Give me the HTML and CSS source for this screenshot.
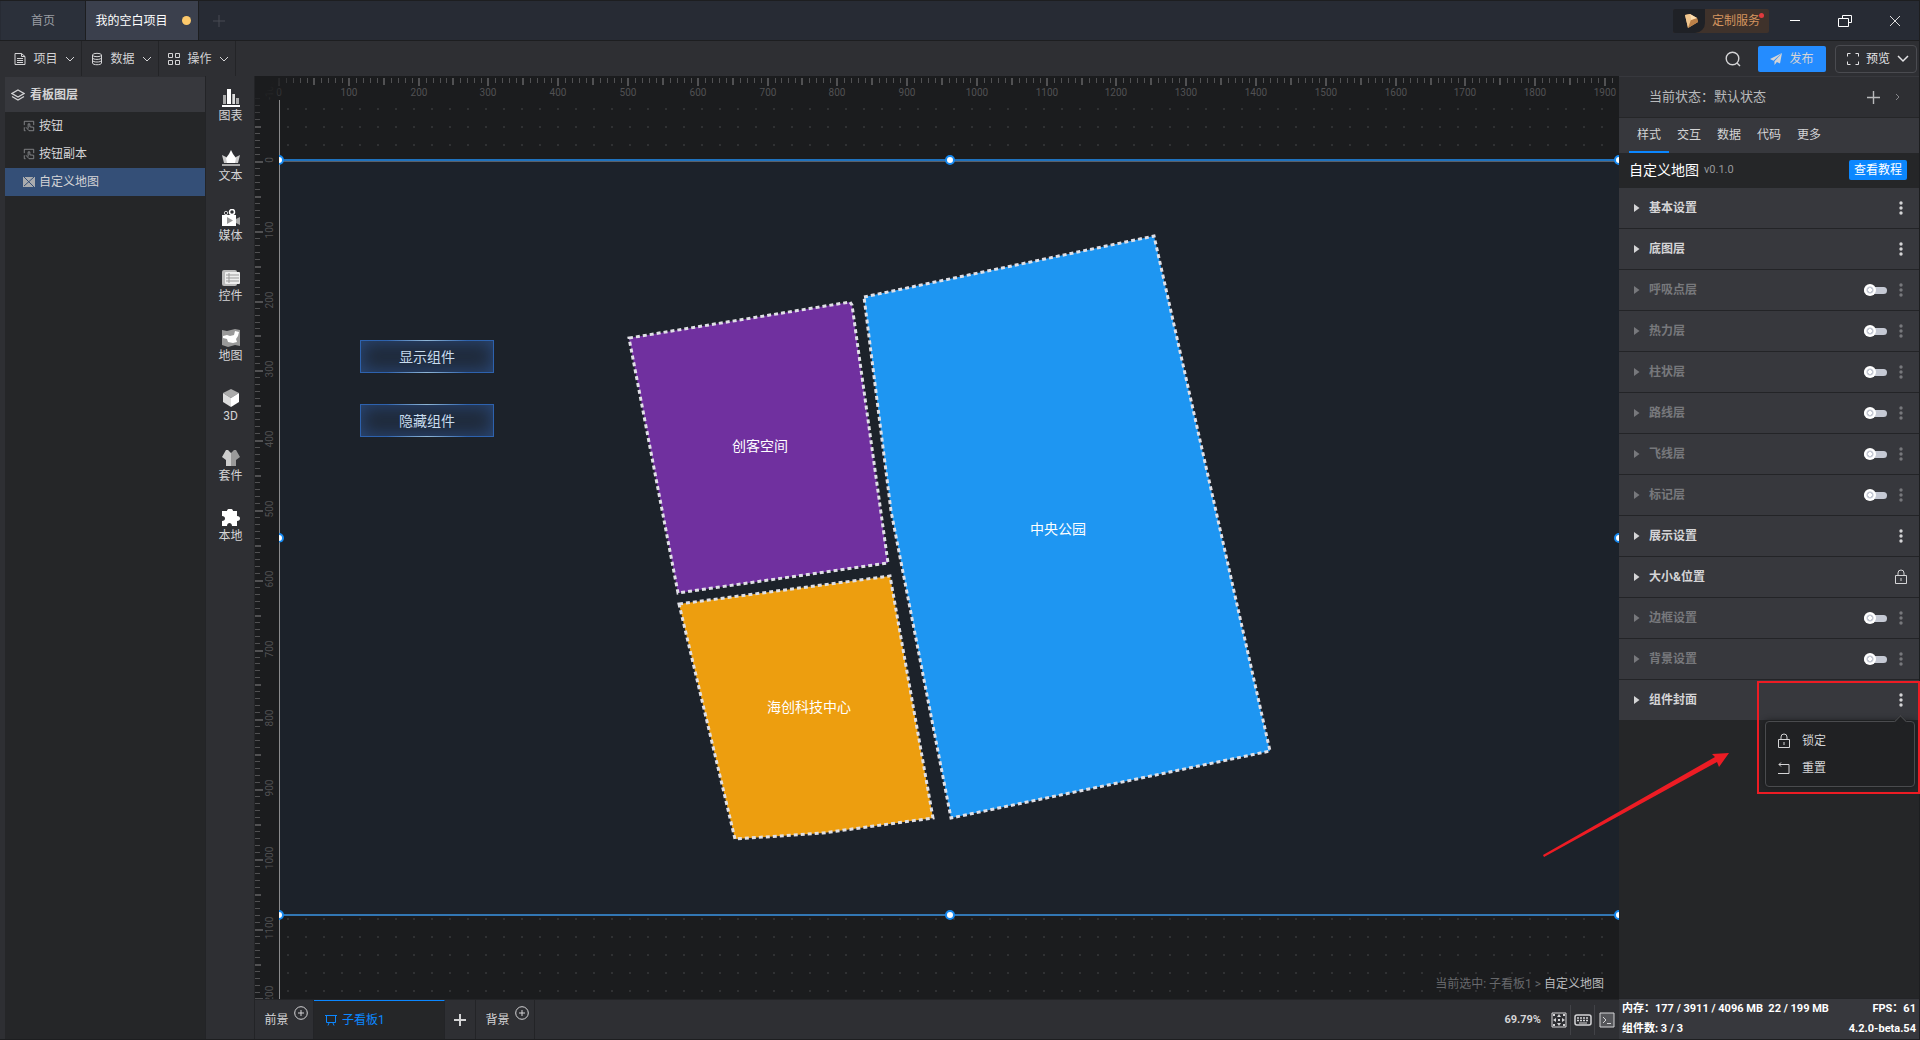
FILE: index.html
```html
<!DOCTYPE html>
<html lang="zh-CN">
<head>
  <meta charset="UTF-8" />
  <meta name="viewport" content="width=device-width, initial-scale=1.0"/>
  <title>我的空白项目</title>
  <link rel="stylesheet" href="styles.css">
</head>
<body>
  <!-- shared icons -->
  <svg class="defs" width="0" height="0">
    <symbol id="chevron" viewBox="0 0 10 6"><path d="M1 1l4 4 4-4" fill="none" stroke="currentColor"/></symbol>
    <symbol id="plus-circle" viewBox="0 0 14 14"><circle cx="7" cy="7" r="6.3" fill="none" stroke="currentColor"/><path d="M7 4v6M4 7h6" stroke="currentColor"/></symbol>
    <symbol id="lock" viewBox="0 0 14 16"><path d="M1.500 6.500h11v8h-11zM4 6.500V4a3 3 0 0 1 6 0v2.500" fill="none" stroke="currentColor"/><path d="M7 9v3" stroke="currentColor"/></symbol>
    <symbol id="dots" viewBox="0 0 4 16"><circle cx="2" cy="3" r="1.700"/><circle cx="2" cy="8" r="1.700"/><circle cx="2" cy="13" r="1.700"/></symbol>
    <symbol id="arrow" viewBox="0 0 6 10"><path d="M0 1l5.500 4L0 9z"/></symbol>
    <symbol id="tap" viewBox="0 0 14 14"><path d="M3 12.500H1.500v-4M1.500 6V1.500h11V6M6 10V4.500h2v3.500l4.500.5v4H7L3.500 8.500" fill="none" stroke="currentColor"/></symbol>
  </svg>

  <header class="titlebar">
    <button class="tab home">首页</button>
    <button class="tab active">我的空白项目<span class="unsaved"></span></button>
    <button class="tab-add" aria-label="新建"><svg width="14" height="14" viewBox="0 0 14 14"><path d="M7 1v12M1 7h12" stroke="currentColor"/></svg></button>
    <div class="window-tools">
      <button class="service">
        <span class="gem"><svg width="16" height="14" viewBox="0 0 16 14"><path d="M1 1l5-1 7 4 1 4-10 6z" fill="#dba76b"/><path d="M1 1l5-1 1 6-3 8z" fill="#f0c68f"/><path d="M13 4l1 4-10 6 3-8z" fill="#bb8048"/><path d="M6 0l7 4-6 2z" fill="#ffdfb0"/></svg></span>
        <span class="service-text">定制服务</span>
        <span class="red-dot"></span>
      </button>
      <button class="win" aria-label="最小化"><svg width="14" height="14" viewBox="0 0 14 14"><path d="M2 6.500h10" stroke="#fff"/></svg></button>
      <button class="win" aria-label="还原"><svg width="14" height="14" viewBox="0 0 14 14"><path d="M.5 4.500h10v8H.5zM4.500 4V1.500h9v7h-3" fill="none" stroke="#fff"/></svg></button>
      <button class="win" aria-label="关闭"><svg width="12" height="12" viewBox="0 0 12 12"><path d="M1 1l10 10M11 1L1 11" stroke="#ddd"/></svg></button>
    </div>
  </header>

  <nav class="toolbar">
    <button class="menu-btn"><svg width="12" height="14" viewBox="0 0 12 14"><path d="M1 1.500h6.500l3.500 3v8H1zM7.500 1.500v3H11M3 6.500h6M3 8.500h6M3 10.500h6" fill="none" stroke="currentColor"/></svg>项目<svg class="chev"><use href="#chevron"/></svg></button>
    <button class="menu-btn"><svg width="12" height="14" viewBox="0 0 12 14"><ellipse cx="6" cy="3" rx="4.500" ry="1.700" fill="none" stroke="currentColor"/><path d="M1.500 3v8c0 2.300 9 2.300 9 0V3M1.500 5.700c0 2.300 9 2.300 9 0M1.500 8.300c0 2.300 9 2.300 9 0" fill="none" stroke="currentColor"/></svg>数据<svg class="chev"><use href="#chevron"/></svg></button>
    <button class="menu-btn"><svg width="12" height="12" viewBox="0 0 12 12"><path d="M.5.500h4v4h-4zM7.500.500h4v4h-4zM.5 7.500h4v4h-4zM7.500 7.500h4v4h-4z" fill="none" stroke="currentColor"/></svg>操作<svg class="chev"><use href="#chevron"/></svg></button>
    <div class="toolbar-right">
      <button class="search" aria-label="搜索"><svg width="16" height="16" viewBox="0 0 16 16"><circle cx="7.500" cy="7.500" r="6.300" fill="none" stroke="currentColor" stroke-width="1.400"/><path d="M12 12l3 3" stroke="currentColor" stroke-width="1.400"/></svg></button>
      <button class="publish"><svg width="12" height="12" viewBox="0 0 12 12"><path d="M12 0L0 6l3.500 1.700zM12 0L4.500 8.300V12l2-2.500zM12 0L6.500 8.800l3.500 1.700z" fill="currentColor"/></svg>发布</button>
      <button class="preview"><svg width="12" height="12" viewBox="0 0 12 12"><path d="M.5 3.500v-3h3M8.500.500h3v3M11.500 8.500v3h-3M3.500 11.500h-3v-3" fill="none" stroke="currentColor"/></svg>预览<svg class="chev bright" viewBox="0 0 12 8"><path d="M1 1l5 5 5-5" fill="none" stroke="currentColor" stroke-width="1.500"/></svg></button>
    </div>
  </nav>

  <main class="workspace">
    <aside class="layers">
      <h2><svg width="14" height="12" viewBox="0 0 14 12"><path d="M7 1l6 3.500L7 8 1 4.500zM1 7.500L7 11l6-3.500" fill="none" stroke="currentColor" stroke-width="1.300"/></svg>看板图层</h2>
      <ul>
        <li><svg width="12" height="12"><use href="#tap"/></svg>按钮</li>
        <li><svg width="12" height="12"><use href="#tap"/></svg>按钮副本</li>
        <li class="selected"><svg width="12" height="12" viewBox="0 0 12 12"><path d="M0 1h12v10H0z" fill="#a9abae"/><path d="M1 1l10 10M11 1L1 10" fill="none" stroke="#344f77"/></svg>自定义地图</li>
      </ul>
    </aside>

    <nav class="components">
      <button><svg viewBox="0 0 18 18"><path d="M1 6h3v9H1zM10 5h3v10h-3zM14 9h3v6h-3z" fill="#aaa"/><path d="M5 0h4v15H5zM0 16h18v2H0z" fill="#fff"/><path d="M11 5h2v10h-2z" fill="#ddd"/></svg>图表</button>
      <button><svg viewBox="0 0 18 18"><path d="M0 6l4 2 5 6 5-6 4-2-2 8H2z" fill="#ccc"/><path d="M9 1l2 4 3 4-1 5H5L4 9l3-4z" fill="#fff"/><path d="M0 15h18v2H0z" fill="#aaa"/></svg>文本</button>
      <button><svg viewBox="0 0 18 18"><circle cx="4" cy="4" r="1.700" fill="none" stroke="#ccc"/><circle cx="10" cy="3" r="2.500" fill="none" stroke="#fff" stroke-width="1.500"/><path d="M0 6h14v11H0z" fill="#fff"/><path d="M14 10l4-2v8l-4-2z" fill="#aaa"/><path d="M5 8l6 3.500L5 15z" fill="#999"/></svg>媒体</button>
      <button><svg viewBox="0 0 18 18"><rect y="1" width="15" height="16" rx="2" fill="#bbb"/><rect x="3" y="3" width="15" height="12" rx="1" fill="#eee"/><path d="M4 6h13M4 9h13M4 12h13M7 4v10" stroke="#999"/></svg>控件</button>
      <button><svg viewBox="0 0 18 18"><path d="M0 1l5 1 8-2 5 1v16l-5-1-7 2-6-2z" fill="#999"/><path d="M1 7l4-1 3 1 4-1 1-4 4 1-1 4-2 3 1 3-4 1-5-1-1-3-4-1z" fill="#fff"/></svg>地图</button>
      <button><svg viewBox="0 0 18 18"><path d="M9 0l8 4-8 5-8-5z" fill="#aaa"/><path d="M1 4l8 5v9l-8-5z" fill="#ddd"/><path d="M17 4L9 9v9l8-5z" fill="#fff"/></svg>3D</button>
      <button><svg viewBox="0 0 18 18"><path d="M4 1h2l3 3v13H4V11L0 8z" fill="#ccc"/><path d="M14 1h-2L9 4v13h5v-6l4-3z" fill="#999"/></svg>套件</button>
      <button><svg viewBox="0 0 18 18"><path d="M0 2h5c0-3 6-3 6 0h4v5c4 0 4 5 0 5v5h-5c0-4-5-4-5 0H0v-5c4 0 4-5 0-5z" fill="#fff"/></svg>本地</button>
    </nav>

    <section class="center">
      <div class="canvas">
        <svg class="ruler" id="ruler"></svg>
        <div class="corner"></div>
        <div class="grid"></div>
        <div class="guide"></div>
        <div class="artboard">
          <button class="stage-btn show">显示组件</button>
          <button class="stage-btn hide">隐藏组件</button>
          <svg class="map" width="1340" height="754" viewBox="0 0 1340 754">
            <path fill="#70309f" d="M350 177L571 141l2 3 36 258-210 30z"/>
            <path fill="#ed9e0f" d="M400 443l211-28 43 242-110 15-88 6z"/>
            <path fill="#1e96f2" d="M585 136L875 75l116 515-319 67L612 350z"/>
            <text x="481" y="290">创客空间</text>
            <text x="779" y="373">中央公园</text>
            <text x="530" y="551">海创科技中心</text>
          </svg>
          <span class="handle tl"></span><span class="handle tc"></span><span class="handle tr"></span>
          <span class="handle ml"></span><span class="handle mr"></span>
          <span class="handle bl"></span><span class="handle bc"></span><span class="handle br"></span>
        </div>
        <div class="crumb">当前选中: 子看板1 &gt; <b>自定义地图</b></div>
      </div>
      <footer class="boards">
        <button class="board">前景<svg class="add"><use href="#plus-circle"/></svg></button>
        <button class="board current"><svg width="12" height="12" viewBox="0 0 12 12"><path d="M0 1.500h12M1.500 2v6.500h9V2M4 9l-1 2.500M8 9l1 2.500" fill="none" stroke="currentColor"/></svg>子看板1</button>
        <button class="board new" aria-label="添加子看板"><svg width="12" height="12" viewBox="0 0 12 12"><path d="M6 0v12M0 6h12" stroke="currentColor" stroke-width="2"/></svg></button>
        <button class="board">背景<svg class="add"><use href="#plus-circle"/></svg></button>
        <div class="zoom">
          <span>69.79%</span>
          <button aria-label="适应画布"><svg width="16" height="16" viewBox="0 0 16 16"><path d="M1 1h14v14H1z" fill="none" stroke="currentColor"/><path d="M8 2l2 3H6zM8 14l2-3H6zM2 8l3-2v4zM14 8l-3-2v4zM7 7h2v2H7zM2 2h2v2H2zM12 2h2v2h-2zM2 12h2v2H2zM12 12h2v2h-2z" fill="currentColor"/></svg></button>
          <button aria-label="快捷键"><svg width="18" height="12" viewBox="0 0 18 12"><rect x="1" y="1" width="16" height="10" rx="2" fill="none" stroke="currentColor" stroke-width="1.500"/><path d="M3 4h12M3 6.500h12" stroke="currentColor" stroke-width="1.500" stroke-dasharray="2 1"/><path d="M5 9h8" stroke="currentColor"/></svg></button>
          <button aria-label="控制台"><svg width="16" height="16" viewBox="0 0 16 16"><path d="M1 1h14v14H1z" fill="#55565a" stroke="currentColor"/><path d="M4 5l3 3-3 3M8 11.500h4" fill="none" stroke="currentColor"/></svg></button>
        </div>
      </footer>
    </section>

    <aside class="props">
      <div class="state">
        <span>当前状态：默认状态</span>
        <button aria-label="添加状态"><svg width="13" height="13" viewBox="0 0 13 13"><path d="M6.500 0v13M0 6.500h13" stroke="currentColor" stroke-width="1.400"/></svg></button>
        <button class="next" aria-label="展开"><svg width="4" height="8" viewBox="0 0 4 8"><path d="M0 1l3 3-3 3" fill="none" stroke="currentColor"/></svg></button>
      </div>
      <nav class="prop-tabs">
        <button class="on">样式</button><button>交互</button><button>数据</button><button>代码</button><button>更多</button>
      </nav>
      <div class="comp-name">
        <h3>自定义地图</h3><small>v0.1.0</small>
        <a href="#">查看教程</a>
      </div>
      <div class="row"><svg class="fold"><use href="#arrow"/></svg><span>基本设置</span><button class="more" aria-label="更多"><svg><use href="#dots"/></svg></button></div>
      <div class="row"><svg class="fold"><use href="#arrow"/></svg><span>底图层</span><button class="more" aria-label="更多"><svg><use href="#dots"/></svg></button></div>
      <div class="row off"><svg class="fold"><use href="#arrow"/></svg><label for="s1">呼吸点层</label><input type="checkbox" id="s1"><button class="more" aria-label="更多"><svg><use href="#dots"/></svg></button></div>
      <div class="row off"><svg class="fold"><use href="#arrow"/></svg><label for="s2">热力层</label><input type="checkbox" id="s2"><button class="more" aria-label="更多"><svg><use href="#dots"/></svg></button></div>
      <div class="row off"><svg class="fold"><use href="#arrow"/></svg><label for="s3">柱状层</label><input type="checkbox" id="s3"><button class="more" aria-label="更多"><svg><use href="#dots"/></svg></button></div>
      <div class="row off"><svg class="fold"><use href="#arrow"/></svg><label for="s4">路线层</label><input type="checkbox" id="s4"><button class="more" aria-label="更多"><svg><use href="#dots"/></svg></button></div>
      <div class="row off"><svg class="fold"><use href="#arrow"/></svg><label for="s5">飞线层</label><input type="checkbox" id="s5"><button class="more" aria-label="更多"><svg><use href="#dots"/></svg></button></div>
      <div class="row off"><svg class="fold"><use href="#arrow"/></svg><label for="s6">标记层</label><input type="checkbox" id="s6"><button class="more" aria-label="更多"><svg><use href="#dots"/></svg></button></div>
      <div class="row"><svg class="fold"><use href="#arrow"/></svg><span>展示设置</span><button class="more" aria-label="更多"><svg><use href="#dots"/></svg></button></div>
      <div class="row"><svg class="fold"><use href="#arrow"/></svg><span>大小&amp;位置</span><button class="more" aria-label="锁定"><svg class="lock"><use href="#lock"/></svg></button></div>
      <div class="row off"><svg class="fold"><use href="#arrow"/></svg><label for="s7">边框设置</label><input type="checkbox" id="s7"><button class="more" aria-label="更多"><svg><use href="#dots"/></svg></button></div>
      <div class="row off"><svg class="fold"><use href="#arrow"/></svg><label for="s8">背景设置</label><input type="checkbox" id="s8"><button class="more" aria-label="更多"><svg><use href="#dots"/></svg></button></div>
      <div class="row last"><svg class="fold"><use href="#arrow"/></svg><span>组件封面</span><button class="more" aria-label="更多"><svg><use href="#dots"/></svg></button>
        <div class="popup">
          <button><svg class="lock"><use href="#lock"/></svg>锁定</button>
          <button><svg width="14" height="14" viewBox="0 0 14 14"><path d="M2 3.500h10v9H1M4 1.500l-2 2 2 2" fill="none" stroke="currentColor"/></svg>重置</button>
        </div>
        <div class="highlight"></div>
        <svg class="pointer" width="186" height="104" viewBox="0 0 186 104"><path d="M0 102L172 4l-3-3 17-1-10 14-2-5L1 104z" fill="#ed1c24"/></svg>
      </div>
      <div class="status">
        <div><span>内存：177 / 3911 / 4096 MB&nbsp; 22 / 199 MB</span><span>FPS：61</span></div>
        <div><span>组件数: 3 / 3</span><span>4.2.0-beta.54</span></div>
      </div>
    </aside>
  </main>

  <script>
    // one tick every 10 stage units, label every 100
    const zoom = 0.6979;
    const originX = 24, originY = 85;

    function drawRuler() {
      const ruler = document.getElementById("ruler");
      const w = ruler.clientWidth, h = ruler.clientHeight;
      let out = "";
      for (let i = 0; originX + i * 10 * zoom < w; i++) {
        const x = Math.round(originX + i * 10 * zoom);
        const len = i % 10 === 0 ? 8 : i % 5 === 0 ? 7 : 5;
        out += `<rect x="${x - (i % 5 ? 0 : 1)}" y="2" width="${i % 5 ? 1 : 2}" height="${len}"/>`;
        if (i % 10 === 0) out += `<text x="${x}" y="20">${i * 10}</text>`;
      }
      for (let i = -10; originY + i * 10 * zoom < h + 10; i++) {
        const y = Math.round(originY + i * 10 * zoom);
        const len = i % 10 === 0 ? 8 : i % 5 === 0 ? 6 : 5;
        out += `<rect x="0" y="${y}" width="${len}" height="${i % 5 ? 1 : 2}"/>`;
        if (i % 10 === 0) out += `<text transform="translate(18 ${y - 1}) rotate(-90)">${i * 10}</text>`;
      }
      ruler.innerHTML = out;
    }
    drawRuler();
    window.addEventListener("resize", drawRuler);
  </script>
</body>
</html>
```
FILE: styles.css
```css
* {
  box-sizing: border-box;
}
body {
  margin: 0;
  height: 100vh;
  display: flex;
  flex-direction: column;
  overflow: hidden;
  padding: 1px 1px 1px 0;
  background: #1d1e20;
  color: #d4d4d6;
  font-family: Roboto, "Noto Sans CJK SC", sans-serif;
  font-size: 12px;
  line-height: 16px;
}
button {
  display: flex;
  align-items: center;
  justify-content: center;
  padding: 0;
  border: none;
  background: none;
  color: inherit;
  font: inherit;
  cursor: pointer;
}
svg {
  flex: none;
}
.defs {
  position: absolute;
}

/* title bar */
.titlebar {
  display: flex;
  height: 39px;
  padding-left: 1px;
  background: #272b34;
}
.tab {
  width: 85px;
  border-right: 1px solid #1d1e20;
  background: #2b303a;
  color: #9a9da3;
}
.tab.active {
  width: 113px;
  gap: 14px;
  padding-left: 2px;
  background: #3b404d;
  color: #fff;
}
.unsaved {
  width: 9px;
  height: 9px;
  border-radius: 50%;
  background: #fdc96b;
}
.tab-add {
  width: 40px;
  color: #484b52;
}
.window-tools {
  display: flex;
  align-items: center;
  margin-left: auto;
}
.service {
  position: relative;
  height: 24px;
  border-radius: 2px;
  overflow: hidden;
  background: #3f322b;
  color: #d4945f;
}
.gem {
  display: flex;
  align-items: center;
  justify-content: center;
  width: 32px;
  height: 24px;
  padding-left: 6px;
  background: #1f2126;
  border-radius: 0 0 10px 0;
}
.service-text {
  padding: 0 9px 0 7px;
}
.red-dot {
  position: absolute;
  top: 4px;
  right: 5px;
  width: 5px;
  height: 5px;
  border-radius: 50%;
  background: #e03a3e;
}
.win {
  width: 50px;
  height: 39px;
  padding-left: 2px;
}

/* toolbar */
.toolbar {
  display: flex;
  height: 35px;
  margin-top: 1px;
  padding-left: 5px;
  background: #2e2f33;
}
.menu-btn {
  width: 77px;
  gap: 7px;
  padding-left: 3px;
  border-right: 1px solid #232427;
}
.chev {
  width: 10px;
  height: 6px;
}
.chev.bright {
  width: 12px;
  height: 8px;
}
.toolbar-right {
  display: flex;
  align-items: center;
  margin-left: auto;
  padding-right: 2px;
}
.search {
  width: 32px;
  margin-right: 9px;
}
.publish {
  width: 68px;
  height: 26px;
  gap: 7px;
  margin-right: 9px;
  border-radius: 2px;
  background: #248cff;
}
.preview {
  width: 82px;
  height: 28px;
  gap: 7px;
  padding-left: 4px;
  border: 1px solid #4a4b50;
  border-radius: 4px;
  color: #e4e4e6;
}

/* main area */
.workspace {
  display: flex;
  flex: 1;
  min-height: 0;
  padding-left: 5px;
  background: #2e2f33;
}
.layers {
  width: 200px;
  margin-top: 1px;
  background: #252628;
}
.layers h2 {
  display: flex;
  align-items: center;
  gap: 5px;
  height: 35px;
  margin: 0;
  padding-left: 6px;
  background: #37383d;
  font-size: 12px;
  font-weight: bold;
}
.layers ul {
  margin: 0;
  padding: 0;
  list-style: none;
}
.layers li {
  display: flex;
  align-items: center;
  gap: 4px;
  height: 28px;
  padding-left: 18px;
}
.layers li svg {
  color: #8f9093;
}
.layers li.selected {
  background: #344f77;
}
.components {
  width: 50px;
  padding: 5px 0 0 1px;
  border-left: 1px solid #232427;
  border-right: 1px solid #232427;
}
.components button {
  flex-direction: column;
  gap: 1px;
  width: 100%;
  height: 50px;
  margin-bottom: 10px;
}
.components svg {
  width: 18px;
  height: 18px;
}
.center {
  display: flex;
  flex: 1;
  flex-direction: column;
  min-width: 0;
}

/* canvas */
.canvas {
  position: relative;
  flex: 1;
  overflow: hidden;
  background: #1b1c1e;
}
.ruler {
  position: absolute;
  width: 100%;
  height: 100%;
  fill: #515153;
  font-size: 10px;
}
.ruler text {
  text-anchor: middle;
}
.corner {
  position: absolute;
  width: 60px;
  height: 60px;
  background: radial-gradient(circle at 0 0, #1b1c1e 18px, transparent 48px);
}
.grid {
  position: absolute;
  top: 32px;
  left: 32px;
  right: 0;
  bottom: 0;
  background: conic-gradient(from 90deg at 16px 16px, #303133 25%, transparent 0) -16px -16px / 18px 18px;
}
.guide {
  position: absolute;
  top: 24px;
  left: 24px;
  bottom: 0;
  width: 1px;
  background: #8a8a8c;
}
.artboard {
  position: absolute;
  top: 83px;
  left: 25px;
  right: 0;
  height: 757px;
  background: #1c222a;
  border-top: 2px solid #1f72bd;
  border-bottom: 2px solid #3277b4;
  box-shadow: inset 0 1px #58606a;
}
.map {
  position: absolute;
  top: 0;
  left: -1px;
}
.map path {
  stroke: #e0e0e6;
  stroke-width: 3;
  stroke-dasharray: 4 3;
}
.map text {
  fill: #fff;
  font-size: 14px;
  text-anchor: middle;
}
.stage-btn {
  position: absolute;
  z-index: 1;
  left: 80px;
  width: 134px;
  height: 33px;
  border: 1px solid;
  border-image: linear-gradient(90deg, #2d62ae 20%, #8fb6d6 50%, #2d62ae 80%) 1;
  background: #1f2a3a;
  box-shadow: inset 0 0 18px #2b4a7c;
  color: #c8dcee;
  font-size: 14px;
}
.stage-btn.show {
  top: 179px;
}
.stage-btn.hide {
  top: 243px;
}
.handle {
  position: absolute;
  width: 10px;
  height: 10px;
  margin: -5px;
  border: 2px solid #1689f0;
  border-radius: 50%;
  background: #fff;
}
.tl, .tc, .tr { top: -1px; }
.ml, .mr { top: 50%; }
.bl, .bc, .br { top: 754px; }
.tl, .ml, .bl { left: -1px; }
.tc, .bc { left: 50%; }
.tr, .mr, .br { left: 100%; }
.tl, .ml, .bl {
  clip-path: inset(0 0 0 5px);
}
.crumb {
  position: absolute;
  right: 15px;
  bottom: 7px;
  color: #67686b;
}
.crumb b {
  color: #b9babc;
  font-weight: normal;
}

/* bottom bar */
.boards {
  display: flex;
  height: 40px;
  border-top: 1px solid #232427;
}
.board {
  width: 59px;
  padding-left: 4px;
  gap: 5px;
  border-right: 1px solid #232427;
}
.board .add {
  width: 14px;
  height: 14px;
  margin-bottom: 14px;
}
.board.current {
  width: 131px;
  justify-content: flex-start;
  gap: 5px;
  padding-left: 11px;
  border-top: 1px solid #0b87ff;
  background: #252628;
  color: #0b87ff;
}
.board.new {
  width: 31px;
  padding: 0;
}
.zoom {
  display: flex;
  align-items: center;
  margin-left: auto;
  font-size: 11px;
  font-weight: bold;
}
.zoom span {
  margin-right: 6px;
}
.zoom button {
  width: 24px;
  height: 30px;
  border-right: 1px solid #414247;
}
.zoom button:last-child {
  border: none;
}

/* property panel */
.props {
  display: flex;
  flex-direction: column;
  width: 300px;
  background: #252628;
}
.state {
  display: flex;
  align-items: center;
  height: 41px;
  margin-bottom: 1px;
  padding: 0 19px 0 30px;
  border-top: 1px solid #37383d;
  background: #2e2f33;
  color: #b9babc;
  font-size: 13px;
}
.state span {
  margin-right: auto;
}
.state .next {
  margin-left: 16px;
  color: #85868a;
}
.prop-tabs {
  display: flex;
  height: 35px;
  padding-left: 10px;
  background: #37383d;
}
.prop-tabs button {
  width: 40px;
  border-bottom: 2px solid transparent;
}
.prop-tabs .on {
  border-color: #0b87ff;
}
.comp-name {
  display: flex;
  align-items: center;
  gap: 5px;
  height: 35px;
  padding: 0 12px 2px 10px;
}
.comp-name h3 {
  margin: 0;
  color: #fff;
  font-size: 14px;
  font-weight: normal;
}
.comp-name small {
  color: #97989b;
  font-size: 11px;
}
.comp-name a {
  margin-left: auto;
  padding: 2px 5px;
  border-radius: 2px;
  background: #0b87ff;
  color: #fff;
  text-decoration: none;
}
.row {
  position: relative;
  display: flex;
  align-items: center;
  height: 41px;
  padding: 0 11px 0 15px;
  border-bottom: 1px solid #232427;
  background: #37383d;
  font-weight: bold;
}
.row.last {
  height: 40px;
  border: none;
}
.fold {
  width: 6px;
  height: 10px;
  margin-right: 9px;
  fill: currentColor;
}
.row > span, .row label {
  margin-right: auto;
}
.off {
  color: #77787c;
}
.row input {
  appearance: none;
  position: relative;
  width: 23px;
  height: 7px;
  margin: 0 7px 0 0;
  border-radius: 4px;
  background: #c5c9d4;
}
.row input::before {
  content: "";
  position: absolute;
  top: -3px;
  left: 0;
  width: 12px;
  height: 12px;
  border-radius: 50%;
  background: radial-gradient(circle, #fff 2px, #c5c9d4 2px 3px, #fff 4px);
}
.more {
  width: 14px;
  height: 16px;
}
.more svg {
  width: 4px;
  height: 16px;
  fill: currentColor;
}
.row .lock {
  width: 14px;
  height: 16px;
}
.popup {
  position: absolute;
  z-index: 2;
  top: 41px;
  right: 4px;
  width: 150px;
  padding: 5px 0;
  border: 1px solid #4a4b4e;
  border-radius: 4px;
  background: #202123;
  box-shadow: 0 0 6px #18191b;
  font-weight: normal;
}
.popup::before {
  content: "";
  position: absolute;
  top: -5px;
  right: 9px;
  width: 8px;
  height: 8px;
  border: solid #4a4b4e;
  border-width: 1px 0 0 1px;
  background: #202123;
  transform: rotate(45deg);
}
.popup button {
  justify-content: flex-start;
  gap: 11px;
  width: 100%;
  height: 27px;
  padding-left: 11px;
}
.highlight {
  position: absolute;
  z-index: 3;
  top: 1px;
  right: -1px;
  width: 163px;
  height: 113px;
  border: 2px solid #ed1c24;
  pointer-events: none;
}
.pointer {
  position: absolute;
  z-index: 3;
  top: 73px;
  right: 190px;
}
.status {
  margin-top: auto;
  padding: 0 3px;
  border-top: 1px solid #232427;
  background: #37383d;
  color: #fff;
  font-size: 11px;
  font-weight: bold;
  line-height: 20px;
}
.status div {
  display: flex;
  justify-content: space-between;
}
```
